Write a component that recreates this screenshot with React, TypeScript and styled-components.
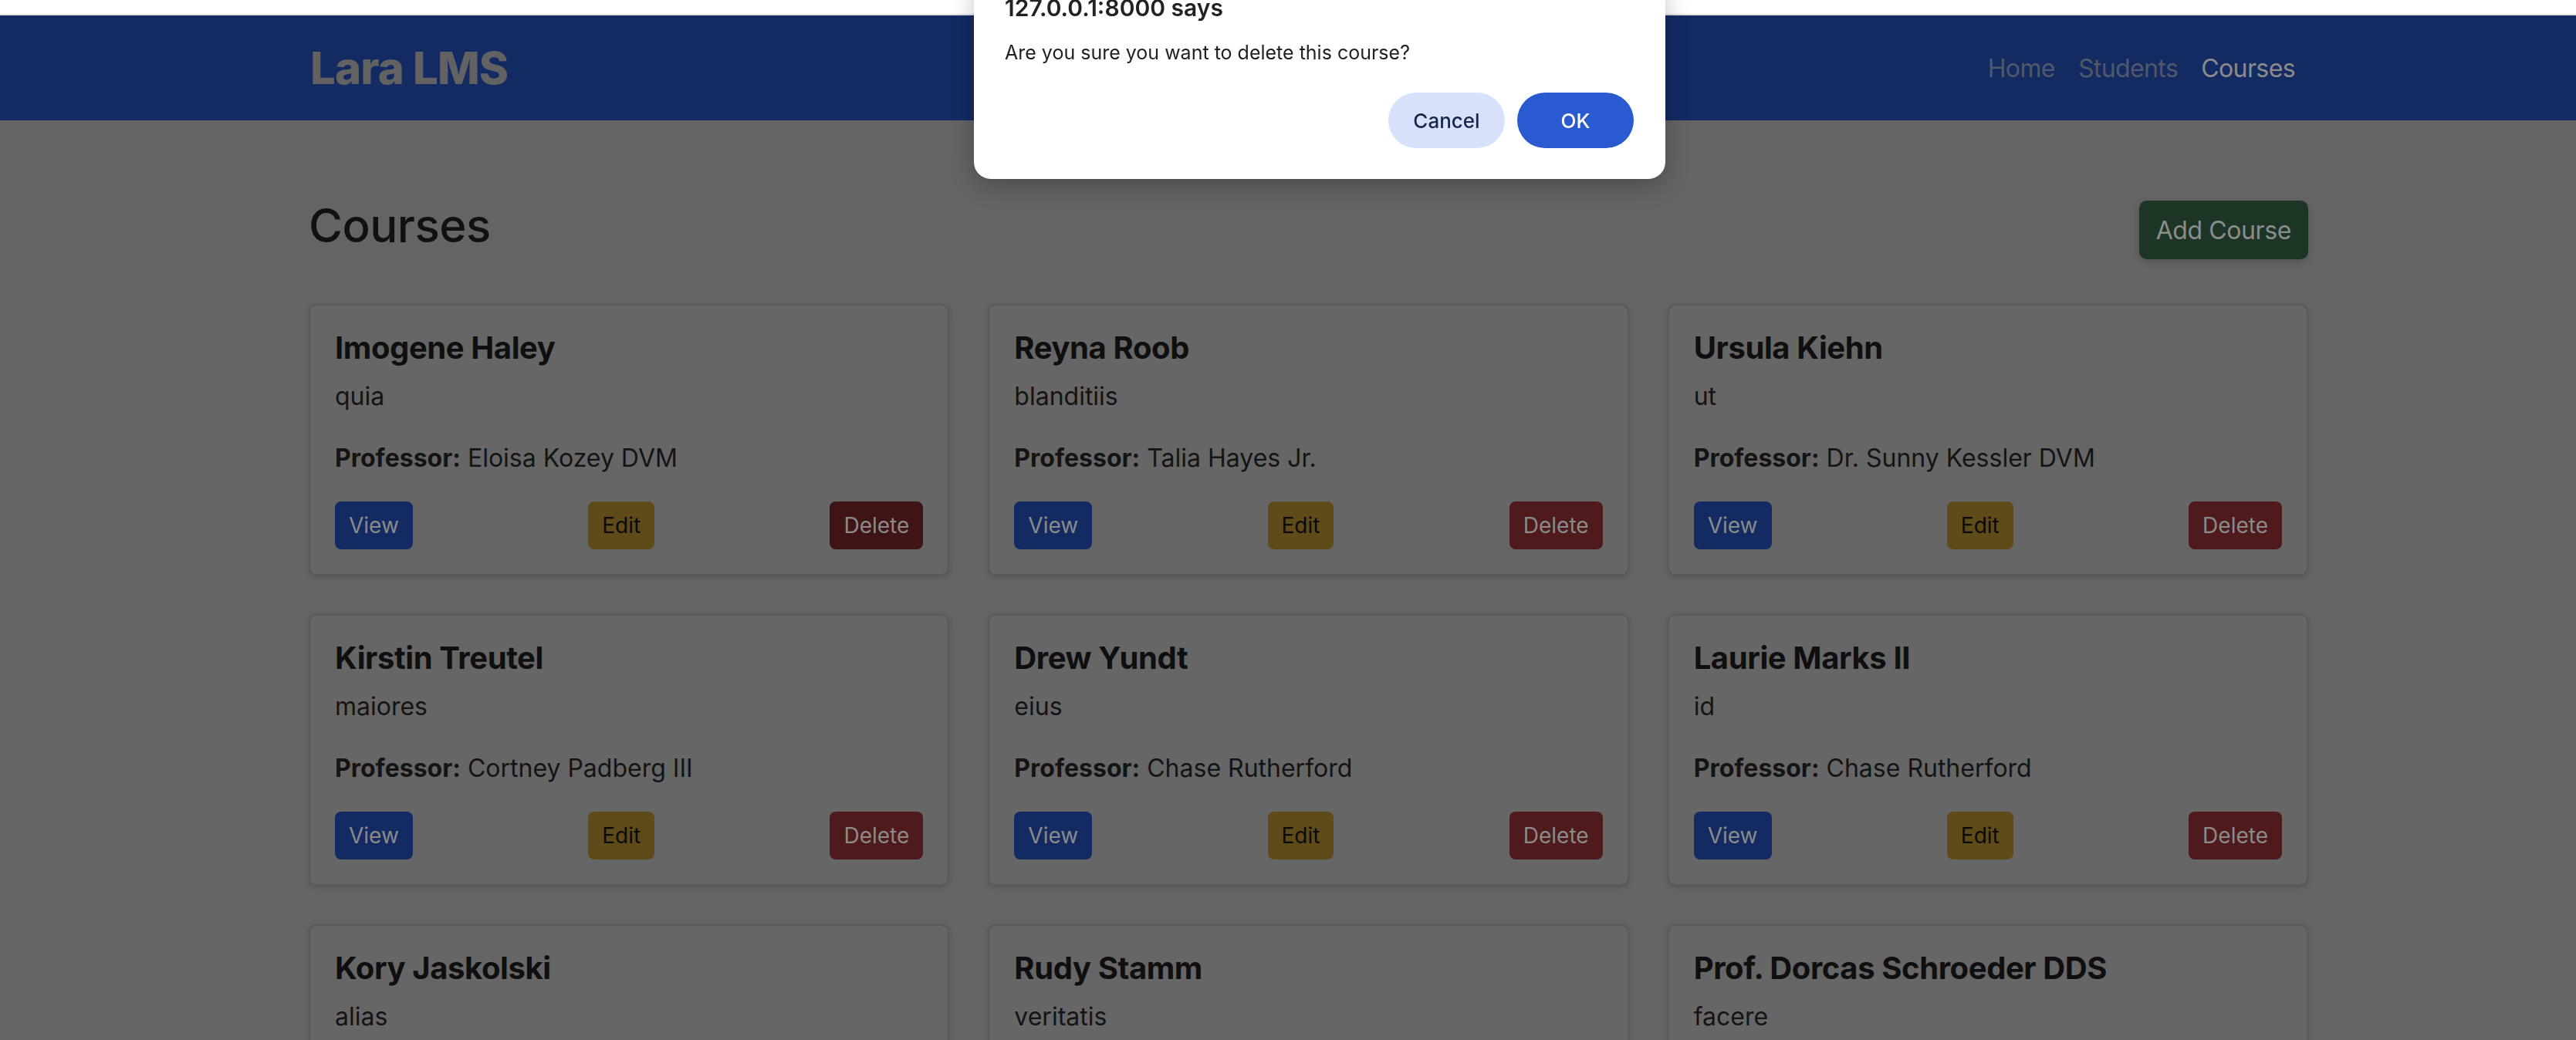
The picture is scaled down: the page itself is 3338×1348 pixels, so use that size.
import React from 'react';
import styled, { createGlobalStyle } from 'styled-components';

const GlobalStyle = createGlobalStyle`
  * {
    margin: 0;
    padding: 0;
    box-sizing: border-box;
    font-family: 'Inter', 'Roboto', sans-serif;
  }
  html, body {
    overflow: hidden;
    background: #636463;
  }
`;

const TopStrip = styled.div`
  height: 20px;
  background: #ffffff;
  border-bottom: 2px solid #e0e0e0;
`

const Nav = styled.nav`
  height: 136px;
  background: #142a63;
  display: flex;
  align-items: center;
  justify-content: space-between;
  padding: 0 364px 0 402px;
`

const Logo = styled.div`
  font-size: 58px;
  font-weight: 800;
  color: #626262;
  letter-spacing: -0.8px;
`

const NavLinks = styled.div`
  display: flex;
  gap: 30px;
`

const NavLink = styled.a<{ $active?: boolean }>`
  font-size: 32px;
  letter-spacing: -0.6px;
  color: ${p => (p.$active ? '#8b8b8b' : '#515869')};
  text-decoration: none;
`

const Main = styled.main`
  padding: 104px 347px 0 400px;
`

const HeaderRow = styled.div`
  display: flex;
  justify-content: space-between;
  align-items: flex-start;
  height: 76px;
  margin-bottom: 58px;
`

const Title = styled.h1`
  font-size: 60px;
  line-height: 64px;
  font-weight: 500;
  color: #111111;
  letter-spacing: -0.5px;
`

const AddButton = styled.button`
  height: 76px;
  padding: 0 22px;
  border: none;
  border-radius: 10px;
  background: #1c3524;
  color: #8c8c8c;
  font-size: 32px;
  letter-spacing: -0.4px;
  box-shadow: 0 3px 8px rgba(0, 0, 0, 0.18);
`

const Grid = styled.div`
  display: grid;
  grid-template-columns: repeat(3, 1fr);
  gap: 50px;
`

const Card = styled.div`
  display: flex;
  flex-direction: column;
  padding: 32px;
  background: #666666;
  border: 2px solid #5a5a5a;
  border-radius: 10px;
  box-shadow: 0 2px 6px rgba(0, 0, 0, 0.14);
`

const CardTitle = styled.h2`
  font-size: 40px;
  line-height: 46px;
  font-weight: 700;
  color: #0f0f0f;
  margin-bottom: 16px;
  letter-spacing: -0.4px;
`

const CardText = styled.p`
  font-size: 32px;
  line-height: 48px;
  color: #141414;
  margin-bottom: 32px;

  b {
    font-weight: 700;
  }
`

const Actions = styled.div`
  display: flex;
  justify-content: space-between;
`

const ActionButton = styled.button<{ $bg: string; $fg: string }>`
  height: 62px;
  padding: 0 18px;
  border: none;
  border-radius: 8px;
  font-size: 28px;
  background: ${p => p.$bg};
  color: ${p => p.$fg};
`

const Dialog = styled.div`
  position: fixed;
  top: -24px;
  left: 1262px;
  width: 896px;
  padding: 16px 41px 40px 40px;
  background: #ffffff;
  border-radius: 22px;
  box-shadow: 0 8px 30px rgba(0, 0, 0, 0.25);
`

const DialogTitle = styled.div`
  font-size: 30px;
  line-height: 36px;
  font-weight: 600;
  color: #222222;
  margin-bottom: 22px;
`

const DialogMessage = styled.div`
  font-size: 25px;
  line-height: 36px;
  color: #222222;
  margin-bottom: 34px;
`

const DialogActions = styled.div`
  display: flex;
  justify-content: flex-end;
  gap: 16px;
`

const PillButton = styled.button<{ $primary?: boolean }>`
  min-width: 151px;
  height: 72px;
  padding: 0 32px;
  border: none;
  border-radius: 36px;
  font-size: 26px;
  font-weight: 500;
  background: ${p => (p.$primary ? '#2a5ad0' : '#d7e2fa')};
  color: ${p => (p.$primary ? '#ffffff' : '#18264f')};
`

type course = {
    name: string,
    description: string,
    professor: string,
}

const courses: course[] = [
    { name: 'Imogene Haley', description: 'quia', professor: 'Eloisa Kozey DVM' },
    { name: 'Reyna Roob', description: 'blanditiis', professor: 'Talia Hayes Jr.' },
    { name: 'Ursula Kiehn', description: 'ut', professor: 'Dr. Sunny Kessler DVM' },
    { name: 'Kirstin Treutel', description: 'maiores', professor: 'Cortney Padberg III' },
    { name: 'Drew Yundt', description: 'eius', professor: 'Chase Rutherford' },
    { name: 'Laurie Marks II', description: 'id', professor: 'Chase Rutherford' },
    { name: 'Kory Jaskolski', description: 'alias', professor: 'Talia Hayes Jr.' },
    { name: 'Rudy Stamm', description: 'veritatis', professor: 'Eloisa Kozey DVM' },
    { name: 'Prof. Dorcas Schroeder DDS', description: 'facere', professor: 'Chase Rutherford' },
]

export default function App() {
    return (
        <>
            <GlobalStyle />
            <TopStrip />
            <Nav>
                <Logo>Lara LMS</Logo>
                <NavLinks>
                    <NavLink>Home</NavLink>
                    <NavLink>Students</NavLink>
                    <NavLink $active>Courses</NavLink>
                </NavLinks>
            </Nav>
            <Main>
                <HeaderRow>
                    <Title>Courses</Title>
                    <AddButton>Add Course</AddButton>
                </HeaderRow>
                <Grid>
                    {courses.map((c, i) => (
                        <Card key={i}>
                            <CardTitle>{c.name}</CardTitle>
                            <CardText>{c.description}</CardText>
                            <CardText><b>Professor:</b> {c.professor}</CardText>
                            <Actions>
                                <ActionButton $bg="#142a63" $fg="#8a8a8a">View</ActionButton>
                                <ActionButton $bg="#5f4a1a" $fg="#0a0a0a">Edit</ActionButton>
                                {/* first card's delete was the one pressed, so it's darker */}
                                <ActionButton $bg={i === 0 ? '#3f1416' : '#4f1a1c'} $fg="#8a8a8a">Delete</ActionButton>
                            </Actions>
                        </Card>
                    ))}
                </Grid>
            </Main>
            <Dialog>
                <DialogTitle>127.0.0.1:8000 says</DialogTitle>
                <DialogMessage>Are you sure you want to delete this course?</DialogMessage>
                <DialogActions>
                    <PillButton>Cancel</PillButton>
                    <PillButton $primary>OK</PillButton>
                </DialogActions>
            </Dialog>
        </>
    )
}
